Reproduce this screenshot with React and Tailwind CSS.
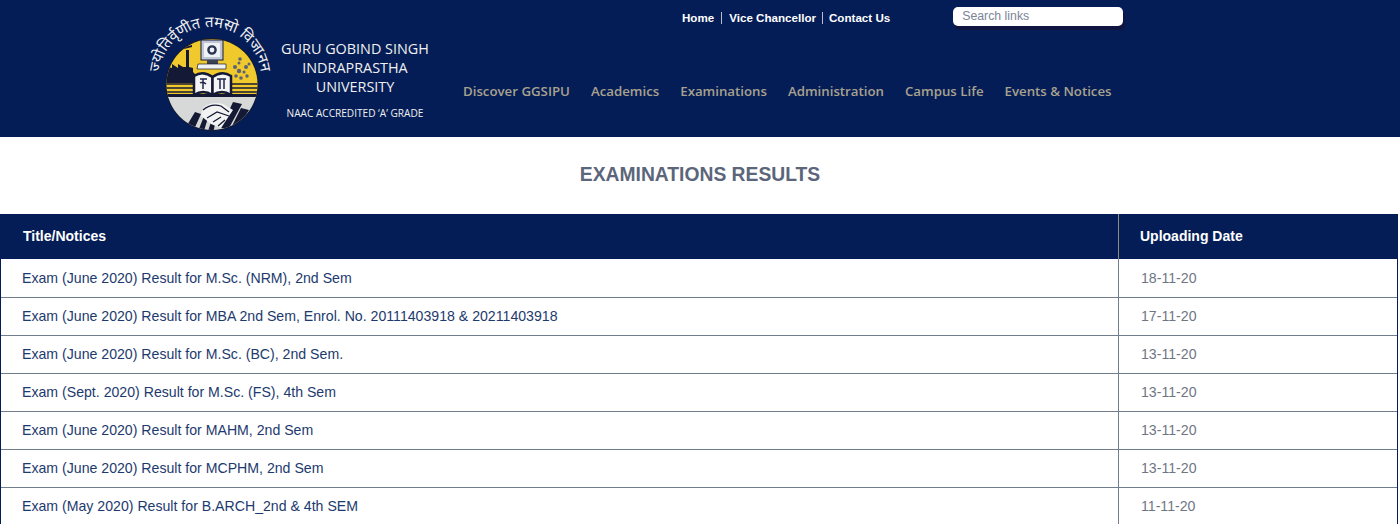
const rows = [
  ["Exam (June 2020) Result for M.Sc. (NRM), 2nd Sem", "18-11-20"],
  ["Exam (June 2020) Result for MBA 2nd Sem, Enrol. No. 20111403918 & 20211403918", "17-11-20"],
  ["Exam (June 2020) Result for M.Sc. (BC), 2nd Sem.", "13-11-20"],
  ["Exam (Sept. 2020) Result for M.Sc. (FS), 4th Sem", "13-11-20"],
  ["Exam (June 2020) Result for MAHM, 2nd Sem", "13-11-20"],
  ["Exam (June 2020) Result for MCPHM, 2nd Sem", "13-11-20"],
  ["Exam (May 2020) Result for B.ARCH_2nd & 4th SEM", "11-11-20"],
];
const nav = ["Discover GGSIPU", "Academics", "Examinations", "Administration", "Campus Life", "Events & Notices"];

function Logo() {
  return (
    <svg width="134" height="137" viewBox="0 0 134 137" className="shrink-0">
      <defs>
        <clipPath id="disc"><circle cx="67" cy="84.5" r="45.5" /></clipPath>
        <path id="arc" d="M14 78 A51 51 0 0 1 116 78" />
      </defs>
      <text fill="#f2f2f2" fontSize="15" fontFamily="'Noto Sans','DejaVu Sans',sans-serif">
        <textPath href="#arc" startOffset="50%" textAnchor="middle">ज्योतिर्वृणीत तमसो विजानन</textPath>
      </text>
      <circle cx="67" cy="84.5" r="46.5" fill="#141a35" />
      <g clipPath="url(#disc)">
        <rect x="20" y="38" width="96" height="60" fill="#f0c92c" />
        <path d="M20 66 L27 68 V64 L33 68 V64 L38 67 H41 V50 H44 V67 L48 68 V72 L54 78 V83 H20Z" fill="#141a35" />
        <path d="M39 47 L47 45 V47 L39 49Z" fill="#141a35" />
        <path d="M20 84 H50 M20 88 H50 M20 92 H50 M84 84 H114 M84 88 H114 M84 92 H114" stroke="#141a35" strokeWidth="1.6" />
        <rect x="20" y="94" width="96" height="3" fill="#141a35" />
        <rect x="20" y="97" width="96" height="40" fill="#d7d9d9" />
        <path d="M38 132 L50 112 L56 114 L47 134Z M52 134 L59 116 L63 118 L58 134Z M62 134 L66 122 L70 124 L68 134Z" fill="#141a35" />
        <path d="M88 102 L97 104 L84 128 L76 128Z" fill="#141a35" />
        <path d="M96 108 L104 110 L92 130 L85 130Z" fill="#141a35" />
        <path d="M58 108 Q66 101 78 104 L88 110 L76 128 L66 124 L56 116Z" fill="#f3f3f3" />
        <path d="M58 110 Q66 103 76 106 L84 112 M62 118 L72 112 L84 116 M68 122 L76 117 M73 126 L80 120" stroke="#141a35" strokeWidth="1.3" fill="none" />
      </g>
      <rect x="56" y="40" width="22" height="20" fill="#bfc6d6" stroke="#141a35" strokeWidth="1" />
      <rect x="59" y="43" width="16" height="14" fill="#eef1f6" />
      <circle cx="67" cy="50" r="3.6" fill="none" stroke="#2a3350" strokeWidth="2.4" />
      <rect x="62" y="60" width="11" height="4" fill="#3b4256" />
      <path d="M53 64 H81 V69 H52Z" fill="#f1f2f3" stroke="#141a35" strokeWidth="0.7" />
      <path d="M49 76 Q58 70 67.5 77 V95 Q58 89 49 95Z" fill="#f5f5f5" stroke="#141a35" strokeWidth="2.5" />
      <path d="M67.5 77 Q77 70 86 76 V95 Q77 89 67.5 95Z" fill="#f5f5f5" stroke="#141a35" strokeWidth="2.5" />
      <path d="M55 79 H62 M58 79 V89 M55 83 Q58 81 61 84 M72 79 H81 M75 79 V89 M79 79 V89" stroke="#20284a" strokeWidth="1.5" fill="none" />
      <g fill="#5d6373">
        <circle cx="95" cy="59" r="1.8" /><circle cx="94" cy="63" r="1.5" /><circle cx="90" cy="67" r="2" />
        <circle cx="94" cy="71" r="2.2" /><circle cx="101" cy="67" r="2" /><circle cx="104" cy="64" r="1.5" />
        <circle cx="99" cy="72" r="1.6" /><circle cx="91" cy="76" r="1.8" /><circle cx="96" cy="78" r="1.8" /><circle cx="102" cy="76" r="1.7" />
      </g>
    </svg>
  );
}

export default function App() {
  return (
    <div className="h-[524px] overflow-hidden bg-white font-['Liberation_Sans',Arial,sans-serif]">
      <header className="flex h-[137px] bg-[#041d56] pl-[145px]">
        <Logo />
        <div className="ml-[2px] flex w-[148px] shrink-0 flex-col items-center pt-[39px] font-['Open_Sans',sans-serif] text-[#f0f0f0]">
          <div className="text-[14.4px] leading-[19px] whitespace-nowrap">GURU GOBIND SINGH</div>
          <div className="text-[14.4px] leading-[19px] whitespace-nowrap">INDRAPRASTHA</div>
          <div className="text-[14.4px] leading-[19px] whitespace-nowrap">UNIVERSITY</div>
          <div className="mt-[10px] text-[10.1px] leading-[14px] whitespace-nowrap">NAAC ACCREDITED ‘A’ GRADE</div>
        </div>
        <div className="ml-[34px] flex flex-col">
          <div className="flex h-[37px] items-start">
            <div className="ml-[219px] mt-[11px] flex items-center text-[11.6px] leading-[14px] font-bold text-white">
              <span>Home</span>
              <span className="mx-[7px] h-[12px] w-px bg-[#b9bfcc]" />
              <span>Vice Chancellor</span>
              <span className="mx-[6px] h-[12px] w-px bg-[#b9bfcc]" />
              <span>Contact Us</span>
            </div>
            <div className="ml-[63px] mt-[7px] flex h-[19px] w-[170px] items-center rounded-[5px] bg-white pl-[9px] text-[12.3px] text-[#7c8598] shadow-[2px_4px_0_#10153f]">
              Search links
            </div>
          </div>
          <nav className="mt-[45px] flex gap-[21px] font-['Open_Sans',sans-serif] text-[13.25px] leading-[18px] font-semibold whitespace-nowrap text-[#a8a28f]">
            {nav.map((n) => <span key={n}>{n}</span>)}
          </nav>
        </div>
      </header>

      <h1 className="flex h-[77px] items-center justify-center text-[19.3px] font-bold text-[#5b667a]">EXAMINATIONS RESULTS</h1>

      <table className="w-[1398px] table-fixed border-collapse text-[14.13px] leading-[20px]">
        <colgroup><col className="w-[1118px]" /><col /></colgroup>
        <thead>
          <tr className="h-[45px] bg-[#041d56] text-left text-[14px] font-bold text-white">
            <th className="border-l border-[#041d56] pb-[2px] pl-[22px]">Title/Notices</th>
            <th className="border-l border-[#8d8d7e] pb-[2px] pl-[21px]">Uploading Date</th>
          </tr>
        </thead>
        <tbody>
          {rows.map(([t, d]) => (
            <tr key={t + d} className="h-[38px] border-b border-[#6f7d8c]">
              <td className="border-l border-[#041d56] pl-[21px] text-[#1d3a6e]">{t}</td>
              <td className="border-x border-[#6f7d8c] border-r-[#041d56] pl-[22px] text-[#6f7683]">{d}</td>
            </tr>
          ))}
        </tbody>
      </table>
    </div>
  );
}
